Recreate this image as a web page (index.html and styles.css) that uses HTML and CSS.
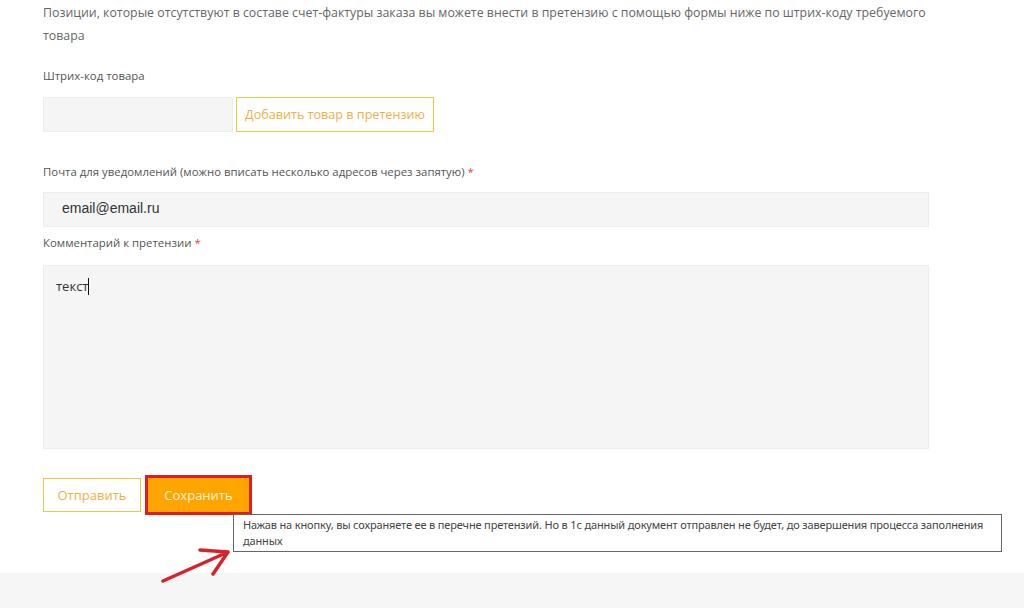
FILE: index.html
```html
<!DOCTYPE html>
<html lang="ru">
<head>
<meta charset="utf-8">
<link rel="stylesheet" href="styles.css">
</head>
<body>
<div class="page">
  <p class="intro">Позиции, которые отсутствуют в составе счет-фактуры заказа вы можете внести в претензию с помощью формы ниже по штрих-коду требуемого товара</p>

  <div class="label label-barcode">Штрих-код товара</div>
  <div class="barcode-row">
    <div class="field field-barcode"></div>
    <button class="btn btn-outline btn-add">Добавить товар в претензию</button>
  </div>

  <div class="label label-mail">Почта для уведомлений (можно вписать несколько адресов через запятую) <span class="req">*</span></div>
  <div class="field field-mail">email@email.ru</div>

  <div class="label label-comment">Комментарий к претензии <span class="req">*</span></div>
  <div class="field field-comment">текст<span class="caret"></span></div>

  <div class="actions">
    <button class="btn btn-outline btn-send">Отправить</button>
    <button class="btn btn-save">Сохранить</button>
    <div class="tooltip">Нажав на кнопку, вы сохраняете ее в перечне претензий. Но в 1с данный документ отправлен не будет, до завершения процесса заполнения данных</div>
    <svg class="arrow" width="80" height="40" viewBox="0 0 80 40">
      <path d="M2 37 L67 8 M39 6 L67 8 M67 8 L52 30" fill="none" stroke="#d8222a" stroke-width="3.5" stroke-linecap="round" stroke-linejoin="round"/>
    </svg>
  </div>
</div>
<div class="footer"></div>
</body>
</html>
```
FILE: styles.css
```css
html, body {
  margin: 0;
  padding: 0;
  background: #fff;
}
body {
  width: 1024px;
  height: 608px;
  overflow: hidden;
  font-family: "Open Sans", "Noto Sans", sans-serif;
  font-size: 13px;
  color: #666;
}
.page {
  padding: 0 95px 0 43px;
  height: 573px;
}
.intro {
  margin: 0 -20px 0 0;
  padding-top: 1px;
  font-size: 12.35px;
  line-height: 23px;
  color: #666;
}
.label {
  color: #555;
  font-size: 11.4px;
  line-height: 18px;
}
.label-barcode {
  margin-top: 20px;
}
.req {
  color: #e0474c;
}
.barcode-row {
  display: flex;
  gap: 3px;
  margin-top: 12px;
}
.field {
  background: #f5f5f5;
  border: 1px solid #ededed;
  box-sizing: border-box;
}
.field-barcode {
  width: 190px;
  height: 35px;
}
.btn {
  font-family: "Open Sans", "Noto Sans", sans-serif;
  font-size: 13px;
  box-sizing: border-box;
  height: 34px;
  cursor: pointer;
  padding: 0;
}
.btn-outline {
  background: #fff;
  border: 1px solid #f3c545;
  color: #efb043;
}
.btn-add {
  width: 198px;
  height: 35px;
  font-size: 12.6px;
}
.label-mail {
  margin-top: 31px;
}
.field-mail {
  margin-top: 11px;
  height: 35px;
  padding-left: 18px;
  font-family: "Liberation Sans", Arial, sans-serif;
  font-size: 14px;
  line-height: 31px;
  color: #333;
}
.label-comment {
  margin-top: 7px;
}
.field-comment {
  margin-top: 13px;
  height: 184px;
  padding: 9px 12px;
  color: #333;
  font-size: 13px;
  line-height: 22px;
}
.caret {
  display: inline-block;
  width: 1px;
  height: 17px;
  background: #111;
  vertical-align: -4px;
}
.actions {
  position: relative;
  display: flex;
  align-items: center;
  gap: 7px;
  margin-top: 29px;
}
.btn-send {
  width: 98px;
}
.btn-save {
  width: 101px;
  background: #ffa500;
  border: none;
  color: #fff5dd;
  outline: 3px solid #e01b24;
}
.tooltip {
  position: absolute;
  left: 190px;
  top: 36px;
  width: 769px;
  box-sizing: border-box;
  border: 1px solid #666;
  background: #fff;
  padding: 2px 8px 2px 9px;
  font-family: "Noto Sans", "Open Sans", sans-serif;
  font-size: 11px;
  letter-spacing: -0.15px;
  line-height: 16px;
  color: #444;
}
.arrow {
  position: absolute;
  left: 118px;
  top: 66px;
}
.footer {
  height: 35px;
  background: #f6f6f7;
}
```
